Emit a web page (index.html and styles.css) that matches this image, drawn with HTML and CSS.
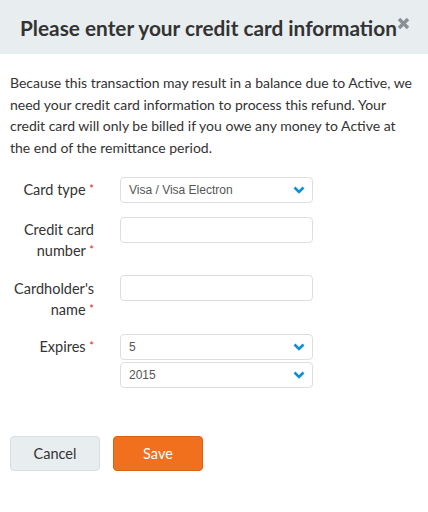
FILE: index.html
```html
<!DOCTYPE html>
<html>
<head>
<meta charset="utf-8">
<link rel="stylesheet" href="styles.css">
</head>
<body>
<div class="modal">
  <div class="header">
    <h1 class="title">Please enter your credit card information</h1>
    <span class="close">
      <svg width="13" height="13" viewBox="0 0 13 13"><path d="M2 2 L11 11 M11 2 L2 11" stroke="#8a8f94" stroke-width="3.4" stroke-linecap="butt"/></svg>
    </span>
  </div>
  <div class="body">
    <p class="intro">Because this transaction may result in a balance due to Active, we need your credit card information to process this refund. Your credit card will only be billed if you owe any money to Active at the end of the remittance period.</p>
    <div class="form">
      <div class="row">
        <label class="label"><span class="line">Card type <span class="req">*</span></span></label>
        <div class="fields">
          <div class="select"><span>Visa / Visa Electron</span><svg class="chev" width="12" height="8" viewBox="0 0 12 8"><path d="M1.5 1.5 L6 6 L10.5 1.5" fill="none" stroke="#0f8ed8" stroke-width="2.6"/></svg></div>
        </div>
      </div>
      <div class="row">
        <label class="label"><span class="line">Credit card</span><span class="line">number <span class="req">*</span></span></label>
        <div class="fields"><div class="input"></div></div>
      </div>
      <div class="row">
        <label class="label"><span class="line">Cardholder's</span><span class="line">name <span class="req">*</span></span></label>
        <div class="fields"><div class="input"></div></div>
      </div>
      <div class="row">
        <label class="label"><span class="line">Expires <span class="req">*</span></span></label>
        <div class="fields stack">
          <div class="select"><span>5</span><svg class="chev" width="12" height="8" viewBox="0 0 12 8"><path d="M1.5 1.5 L6 6 L10.5 1.5" fill="none" stroke="#0f8ed8" stroke-width="2.6"/></svg></div>
          <div class="select"><span>2015</span><svg class="chev" width="12" height="8" viewBox="0 0 12 8"><path d="M1.5 1.5 L6 6 L10.5 1.5" fill="none" stroke="#0f8ed8" stroke-width="2.6"/></svg></div>
        </div>
      </div>
    </div>
    <div class="actions">
      <button class="btn cancel">Cancel</button>
      <button class="btn save">Save</button>
    </div>
  </div>
</div>
</body>
</html>
```
FILE: styles.css
```css
* { box-sizing: border-box; }
body {
  margin: 0;
  background: #fff;
  font-family: Lato, "Liberation Sans", sans-serif;
  color: #333;
}
.header {
  background: #e8edf0;
  height: 54px;
  display: flex;
  align-items: center;
  padding: 0 20px;
  position: relative;
}
.title {
  margin: 0;
  font-size: 20.8px;
  font-weight: 700;
  color: #333;
  white-space: nowrap;
}
.close {
  position: absolute;
  left: 397px;
  top: 17px;
  line-height: 0;
}
.body {
  padding: 18px 10px 0 10px;
}
.intro {
  margin: 0;
  font-size: 14px;
  line-height: 21.7px;
  color: #333;
}
.form {
  margin-top: 18px;
  display: flex;
  flex-direction: column;
  gap: 14px;
}
.row {
  display: flex;
  align-items: flex-start;
}
.label {
  width: 84px;
  text-align: right;
  font-size: 14.5px;
  line-height: 21px;
  color: #333;
  padding-top: 2.5px;
}
.line {
  display: block;
  height: 21px;
}
.req {
  color: #e0262b;
  font-size: 11px;
  line-height: 0;
  vertical-align: 2px;
}
.fields {
  margin-left: 26px;
  width: 193px;
  display: flex;
  flex-direction: column;
  gap: 2px;
}
.select, .input {
  height: 26px;
  border: 1px solid #dcdfe2;
  border-radius: 4px;
  background: #fff;
}
.select {
  display: flex;
  align-items: center;
  justify-content: space-between;
  padding: 0 7px 0 8px;
  font-family: "Liberation Sans", Arial, sans-serif;
  font-size: 12px;
  color: #555;
}
.actions {
  margin-top: 48px;
  display: flex;
  gap: 13px;
}
.btn {
  height: 35px;
  width: 90px;
  border-radius: 4px;
  font-family: inherit;
  font-size: 14.5px;
}
.cancel {
  background: #e8edf0;
  border: 1px solid #d8dfe4;
  color: #333;
}
.save {
  background: #f0701e;
  border: 1px solid #d9610f;
  color: #fff;
}
```
